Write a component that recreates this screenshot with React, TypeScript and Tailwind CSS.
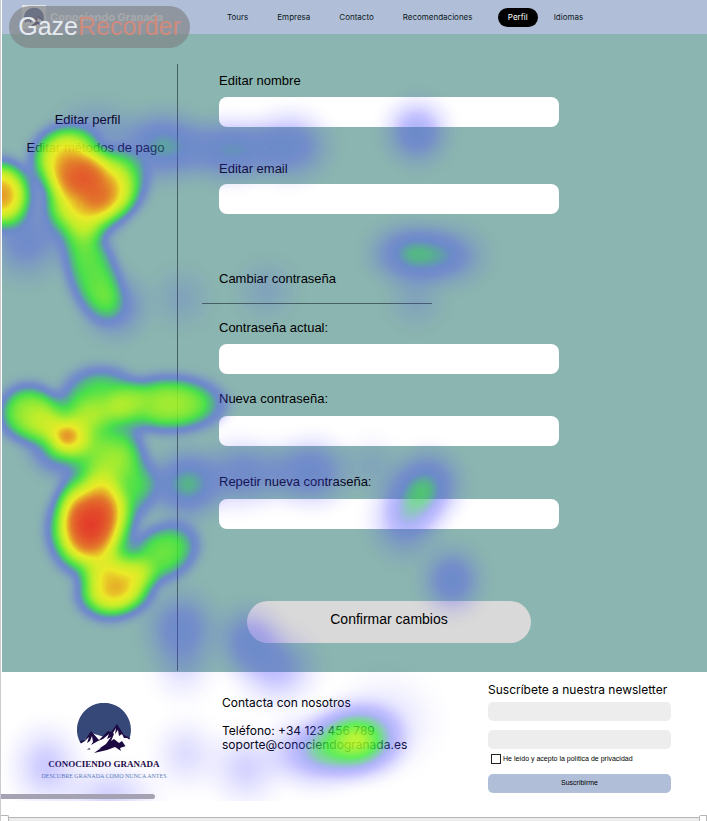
import React from "react";

type Spot = { x: number; y: number; rx: number; ry: number; a: number; r?: number };

// Long fixations: a wide plateau with a steep edge.
const plateaus: Spot[] = [
  // sidebar links
  { x: 66, y: 160, rx: 44, ry: 42, a: 0.85 },
  { x: 88, y: 195, rx: 52, ry: 48, a: 0.8 },
  { x: 112, y: 182, rx: 42, ry: 42, a: 0.62 },
  { x: 0, y: 194, rx: 38, ry: 42, a: 0.88 },
  { x: 76, y: 212, rx: 40, ry: 42, a: 0.35 },
  { x: 92, y: 274, rx: 32, ry: 58, a: 0.53, r: -18 },
  // lower left
  { x: 28, y: 413, rx: 38, ry: 36, a: 0.65 },
  { x: 100, y: 396, rx: 48, ry: 36, a: 0.52 },
  { x: 168, y: 404, rx: 67, ry: 35, a: 0.66 },
  { x: 104, y: 440, rx: 44, ry: 52, a: 0.42 },
  { x: 120, y: 482, rx: 40, ry: 56, a: 0.52 },
  { x: 90, y: 500, rx: 40, ry: 42, a: 0.5 },
  { x: 89, y: 529, rx: 50, ry: 57, a: 0.97 },
  { x: 115, y: 587, rx: 48, ry: 38, a: 0.86, r: -20 },
  { x: 162, y: 553, rx: 46, ry: 34, a: 0.57, r: -30 },
];

// Short fixations: a soft bell.
const glances: Spot[] = [
  // sidebar links
  { x: 80, y: 240, rx: 44, ry: 40, a: 0.2 },
  { x: 114, y: 306, rx: 44, ry: 46, a: 0.3 },
  { x: 25, y: 238, rx: 52, ry: 58, a: 0.27 },
  { x: 95, y: 130, rx: 56, ry: 40, a: 0.16 },
  { x: 162, y: 146, rx: 62, ry: 48, a: 0.38 },
  { x: 230, y: 150, rx: 66, ry: 44, a: 0.34 },
  { x: 288, y: 146, rx: 56, ry: 48, a: 0.3 },
  // form, upper half
  { x: 416, y: 132, rx: 44, ry: 46, a: 0.31 },
  { x: 410, y: 254, rx: 56, ry: 42, a: 0.38 },
  { x: 446, y: 256, rx: 54, ry: 42, a: 0.27 },
  { x: 180, y: 298, rx: 42, ry: 42, a: 0.1 },
  { x: 265, y: 290, rx: 42, ry: 42, a: 0.1 },
  { x: 415, y: 300, rx: 40, ry: 40, a: 0.1 },
  // lower left
  { x: 65, y: 436, rx: 52, ry: 52, a: 0.9 },
  { x: 187, y: 484, rx: 48, ry: 48, a: 0.42 },
  { x: 150, y: 486, rx: 34, ry: 34, a: 0.16 },
  // form, lower half
  { x: 238, y: 474, rx: 50, ry: 48, a: 0.24 },
  { x: 275, y: 473, rx: 44, ry: 44, a: 0.14 },
  { x: 312, y: 472, rx: 50, ry: 48, a: 0.28 },
  { x: 370, y: 466, rx: 42, ry: 40, a: 0.09 },
  { x: 423, y: 489, rx: 48, ry: 54, a: 0.42, r: 35 },
  { x: 404, y: 520, rx: 48, ry: 54, a: 0.26 },
  { x: 451, y: 580, rx: 42, ry: 46, a: 0.3 },
  { x: 180, y: 628, rx: 50, ry: 52, a: 0.28 },
  { x: 248, y: 640, rx: 46, ry: 48, a: 0.26 },
  { x: 276, y: 668, rx: 56, ry: 52, a: 0.22 },
  { x: 182, y: 668, rx: 44, ry: 46, a: 0.1 },
  // footer
  { x: 356, y: 740, rx: 62, ry: 50, a: 0.65 },
  { x: 316, y: 752, rx: 66, ry: 48, a: 0.34 },
  { x: 385, y: 722, rx: 68, ry: 64, a: 0.1 },
  { x: 45, y: 766, rx: 48, ry: 56, a: 0.18 },
  { x: 185, y: 754, rx: 44, ry: 48, a: 0.12 },
  { x: 245, y: 768, rx: 52, ry: 52, a: 0.15 },
  { x: 108, y: 794, rx: 66, ry: 40, a: 0.15 },
];

function Spots({ items, fill }: { items: Spot[]; fill: string }) {
  return items.map((s, i) => (
    <ellipse key={i} cx={s.x} cy={s.y} rx={s.rx} ry={s.ry} fill={fill} opacity={s.a} transform={`rotate(${s.r ?? 0} ${s.x} ${s.y})`} />
  ));
}

function Heatmap() {
  return (
    <svg className="pointer-events-none absolute top-0 left-0" width="707" height="801" aria-hidden="true">
      <defs>
        <radialGradient id="bell">
          <stop offset="0" stopOpacity="1" />
          <stop offset="0.1" stopOpacity="0.97" />
          <stop offset="0.2" stopOpacity="0.88" />
          <stop offset="0.3" stopOpacity="0.75" />
          <stop offset="0.4" stopOpacity="0.6" />
          <stop offset="0.5" stopOpacity="0.45" />
          <stop offset="0.6" stopOpacity="0.31" />
          <stop offset="0.7" stopOpacity="0.2" />
          <stop offset="0.8" stopOpacity="0.11" />
          <stop offset="0.9" stopOpacity="0.04" />
          <stop offset="1" stopOpacity="0" />
        </radialGradient>
        <radialGradient id="plateau">
          <stop offset="0" stopOpacity="1" />
          <stop offset="0.2" stopOpacity="0.98" />
          <stop offset="0.4" stopOpacity="0.91" />
          <stop offset="0.5" stopOpacity="0.83" />
          <stop offset="0.6" stopOpacity="0.7" />
          <stop offset="0.7" stopOpacity="0.54" />
          <stop offset="0.8" stopOpacity="0.36" />
          <stop offset="0.9" stopOpacity="0.17" />
          <stop offset="1" stopOpacity="0" />
        </radialGradient>
        <filter id="ramp" filterUnits="userSpaceOnUse" x="1" y="0" width="706" height="801" colorInterpolationFilters="sRGB">
          <feGaussianBlur stdDeviation="4" />
          <feColorMatrix values="0 0 0 1 0  0 0 0 1 0  0 0 0 1 0  0 0 0 1 0" />
          <feComponentTransfer>
            <feFuncR type="table" tableValues="0.28 0.28 0.28 0.27 0.2 0.22 0.5 0.78 0.96 0.92 0.92" />
            <feFuncG type="table" tableValues="0.25 0.25 0.25 0.33 0.7 0.92 0.94 0.96 0.94 0.45 0.12" />
            <feFuncB type="table" tableValues="1 1 1 0.92 0.45 0.2 0.15 0.1 0.1 0.12 0.13" />
            <feFuncA type="table" tableValues="0 0.15 0.32 0.44 0.6 0.8 0.86 0.89 0.91 0.92 0.94" />
          </feComponentTransfer>
        </filter>
      </defs>
      <g filter="url(#ramp)">
        <Spots items={plateaus} fill="url(#plateau)" />
        <Spots items={glances} fill="url(#bell)" />
      </g>
    </svg>
  );
}

function Mountains({ className }: { className: string }) {
  return (
    <svg viewBox="0 0 54 50" className={className} aria-hidden="true">
      <path d="M4 41A27 27 0 1 1 51 39L40 24L31 35L14 30Z" fill="#364878" />
      <path d="M3 38L8 37L14 28L22 37L31 28L34 29L40 21L47 32L53 35L49 43L43 45L44 48L38 44L30 47L17 50L24 45L15 46L8 47Z" fill="#1d0a42" />
      <path
        d="M3 41L8 38L12 34L10 40L13 38L15 33L16 39L14 42L21 38L26 36L32 31L30 36L34 34L29 41L23 45L16 48L12 45L8 49Z M36 30L39 25L38 31L41 27L42 33L45 31L47 35L50 35L53 37L49 44L45 38L42 40L37 36L34 38L37 31Z"
        fill="#fff"
      />
    </svg>
  );
}

function Field({ id, label, type, className, inputClass }: { id: string; label: string; type: string; className: string; inputClass: string }) {
  return (
    <div className={className}>
      <label htmlFor={id} className="block text-[13px] leading-[22px]">{label}</label>
      <input id={id} type={type} className={`block h-[30px] w-full rounded-lg bg-white px-3 text-sm ${inputClass}`} />
    </div>
  );
}

export default function App() {
  return (
    <div className="relative flex min-h-screen flex-col overflow-hidden border-l border-[#c9cccf] bg-white pl-px font-[Inter,'Liberation_Sans',sans-serif] text-[#0b1a20]">
      <header className="flex h-[34px] items-center bg-[#b1bed8] text-[8px]">
        <a href="#inicio" className="flex w-[225px] items-center gap-1 pl-5 text-[11px] font-bold text-white">
          <span className="flex h-6 w-6 items-center justify-center bg-[#e5e5e5]">
            <Mountains className="h-5 w-5" />
          </span>
          Conociendo Granada
        </a>
        <nav className="flex items-center gap-[29px]">
          <a href="#tours">Tours</a>
          <a href="#empresa">Empresa</a>
          <a href="#contacto">Contacto</a>
          <a href="#recomendaciones" className="w-[74px]">Recomendaciones</a>
          <div className="-ml-2 flex items-center gap-4">
            <a href="#perfil" className="flex h-[19px] w-10 items-center justify-center rounded-full bg-black text-white">Perfil</a>
            <a href="#idiomas">Idiomas</a>
          </div>
        </nav>
      </header>

      <main className="flex bg-[#8bb5b0] font-['Liberation_Sans',sans-serif] text-black">
        <aside className="mt-[30px] mb-px flex w-[176px] shrink-0 flex-col items-center gap-1.5 border-r border-[#46615f] pt-[45px] text-[13px] leading-[22px]">
          <a href="#perfil" className="pr-1">Editar perfil</a>
          <a href="#pagos" className="pl-3 whitespace-nowrap">Editar métodos de pago</a>
        </aside>
        <form className="flex-1 pt-9 pb-[29px] pl-[41px]" onSubmit={(e) => e.preventDefault()}>
          <div className="max-w-[340px]">
            <Field id="nombre" label="Editar nombre" type="text" className="" inputClass="mt-[5px]" />
            <Field id="email" label="Editar email" type="email" className="mt-[31px]" inputClass="mt-1" />
            <h2 className="mt-[54px] text-[13px] leading-[22px]">Cambiar contraseña</h2>
            <hr className="mt-[13px] -ml-[17px] w-[230px] border-[#46615f]" />
            <Field id="actual" label="Contraseña actual:" type="password" className="mt-[13px]" inputClass="mt-[5px]" />
            <Field id="nueva" label="Nueva contraseña:" type="password" className="mt-[14px]" inputClass="mt-1.5" />
            <Field id="repetir" label="Repetir nueva contraseña:" type="password" className="mt-[25px]" inputClass="mt-1.5" />
            <button className="mx-auto mt-[72px] block h-[42px] w-[284px] rounded-full bg-[#d9d9d9] pb-[5px] text-[14px]">Confirmar cambios</button>
          </div>
        </form>
      </main>

      <footer className="flex h-[145px] shrink-0 text-black">
        <div className="flex w-[204px] shrink-0 flex-col items-center pt-[31px] text-center font-['Liberation_Serif',serif]">
          <Mountains className="h-[50px] w-[54px]" />
          <p className="mt-1 text-[9px] leading-[14px] font-bold whitespace-nowrap text-[#1d0a42]">CONOCIENDO GRANADA</p>
          <p className="text-[6px] leading-[10px] whitespace-nowrap text-[#5f86b4]">DESCUBRE GRANADA COMO NUNCA ANTES</p>
        </div>
        <address className="w-[282px] shrink-0 pt-6 pl-4 text-[12px] leading-[14px] not-italic">
          <p>Contacta con nosotros</p>
          <p className="mt-[14px]">Teléfono: +34 123 456 789</p>
          <a href="mailto:soporte@conociendogranada.es">soporte@conociendogranada.es</a>
        </address>
        <form className="mr-9 min-w-0 flex-1 pt-2.5" onSubmit={(e) => e.preventDefault()}>
          <h2 className="text-[12px] leading-4 whitespace-nowrap">Suscríbete a nuestra newsletter</h2>
          <input aria-label="Nombre" className="mt-1 block h-[19px] w-full rounded-[5px] bg-[#ededed] px-2 text-[8px]" />
          <input aria-label="Email" type="email" className="mt-[9px] block h-[19px] w-full rounded-[5px] bg-[#ededed] px-2 text-[8px]" />
          <label className="mt-[5px] ml-[3px] flex h-2.5 items-center gap-0.5 font-['Liberation_Sans',sans-serif] text-[7px] whitespace-nowrap">
            <input type="checkbox" className="h-2.5 w-2.5 appearance-none border border-[#222]" />
            He leído y acepto la política de privacidad
          </label>
          <button className="mt-2.5 block h-[19px] w-full rounded-[5px] bg-[#b1bed8] font-['Liberation_Sans',sans-serif] text-[7px]">Suscribirme</button>
        </form>
      </footer>

      <div className="-ml-0.5 h-1 shrink-0 border-t border-[#b5b5b5] bg-[#ececec]" />

      <Heatmap />

      <div className="absolute top-[794px] left-0 h-[5px] w-[154px] rounded-r-full bg-[#a5a3b3]" />
      <div className="absolute bottom-0 -left-0.5 h-1.5 w-2.5 rounded-tr-xs border border-b-0 border-[#b5b5b5] bg-white" />
      <div className="absolute right-0 bottom-0 h-1.5 w-2 rounded-tl-xs border border-b-0 border-[#b5b5b5] bg-white" />
      <div className="absolute top-1.5 left-2 flex h-[42px] w-[181px] items-center justify-center rounded-full bg-[#808488]/70 font-['Liberation_Sans',sans-serif] text-[25px] text-[#e6ebf2]">
        Gaze<span className="text-[#cf8b7c]">Recorder</span>
      </div>
    </div>
  );
}
